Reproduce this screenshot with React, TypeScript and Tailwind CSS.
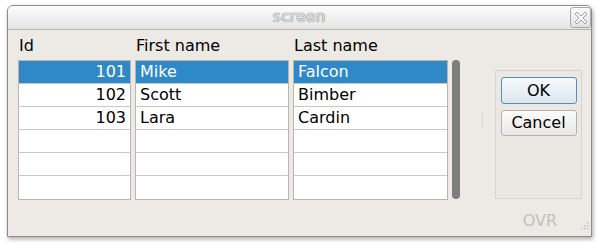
import React from "react";

type Row = { id: string; first: string; last: string };

const rows: Row[] = [
  { id: "101", first: "Mike", last: "Falcon" },
  { id: "102", first: "Scott", last: "Bimber" },
  { id: "103", first: "Lara", last: "Cardin" },
  { id: "", first: "", last: "" },
  { id: "", first: "", last: "" },
  { id: "", first: "", last: "" },
];

function Column({
  values,
  width,
  alignRight,
}: {
  values: string[];
  width: string;
  alignRight?: boolean;
}) {
  return (
    <div className={`${width} border border-[#b8b6b2] bg-white flex flex-col`}>
      {values.map((v, i) => (
        <div
          key={i}
          className={`h-[23px] leading-[22px] px-[4px] text-[16px] ${
            i < values.length - 1 ? "border-b border-[#c8c8c8]" : ""
          } ${alignRight ? "text-right" : "text-left"} ${
            i === 0 ? "bg-[#2f88c8] text-white" : "text-black"
          }`}
        >
          {v}
        </div>
      ))}
    </div>
  );
}

export default function App() {
  return (
    <div className="w-[600px] h-[243px] bg-white pt-[5px] pl-[7px] font-['DejaVu_Sans',sans-serif]">
      <div className="w-[585px] h-[232px] border border-[#8c8c8c] rounded-t-[6px] bg-[#edeae6] shadow-[1px_2px_4px_rgba(0,0,0,0.35)] flex flex-col">
        {/* title bar */}
        <div className="h-[24px] rounded-t-[5px] bg-gradient-to-b from-[#fdfdfd] to-[#e4e4e4] border-b border-[#b4b4b4] flex items-center relative">
          <div className="flex-1 text-center text-[15px] text-[#e8e8e8] [text-shadow:0_0_1px_#7e7e7e,0_0_1px_#7e7e7e,0_0_1px_#7e7e7e,1px_1px_0_#ffffff] tracking-[0.5px]">
            screen
          </div>
          <div className="absolute right-[0px] top-[1px] w-[21px] h-[21px] border border-[#a8a8a8] rounded-[3px] bg-gradient-to-b from-[#fafafa] to-[#e2e2e2] flex items-center justify-center">
            <svg width="16" height="16" viewBox="0 0 16 16">
              <path
                d="M2 4 L4 2 L8 6 L12 2 L14 4 L10 8 L14 12 L12 14 L8 10 L4 14 L2 12 L6 8 Z"
                fill="#f6f6f6"
                stroke="#9a9a9a"
                strokeWidth="0.9"
                strokeLinejoin="round"
              />
            </svg>
          </div>
        </div>

        {/* body */}
        <div className="flex flex-1 pl-[10px] pt-[6px]">
          <div className="flex flex-col">
            <div className="flex h-[20px] items-center text-[16px] leading-[20px] text-black">
              <div className="w-[117px] pl-[1px]">Id</div>
              <div className="w-[158px] pl-[1px]">First name</div>
              <div className="pl-[1px]">Last name</div>
            </div>
            <div className="flex gap-[4px] mt-[4px]">
              <Column values={rows.map((r) => r.id)} width="w-[113px]" alignRight />
              <Column values={rows.map((r) => r.first)} width="w-[154px]" />
              <Column values={rows.map((r) => r.last)} width="w-[155px]" />
              <div className="w-[8px] h-[139px] rounded-[4px] bg-[#7d7d7d]" />
            </div>
          </div>

          <div className="flex items-start pt-[76px] pl-[22px]">
            <div className="w-[2px] h-[15px] border-l border-dotted border-[#c4c4c4]" />
          </div>

          <div className="flex flex-col ml-[11px]">
            <div className="mt-[34px] w-[87px] h-[129px] border border-[#d6d3ce] bg-[#ebe8e3] rounded-[1px] flex flex-col items-center pt-[6px] gap-[6px]">
              <div className="w-[76px] h-[27px] rounded-[3px] border border-[#4f8fc6] bg-gradient-to-b from-[#f6f9fc] to-[#dde6ee] flex items-center justify-center text-[16px] text-black">
                OK
              </div>
              <div className="w-[76px] h-[26px] rounded-[3px] border border-[#b4b2ae] bg-gradient-to-b from-[#fcfcfc] to-[#e8e7e5] flex items-center justify-center text-[16px] text-black">
                Cancel
              </div>
            </div>
            <div className="flex items-end justify-end mt-[10px] mr-[-7px]">
              <span className="text-[16px] leading-[24px] text-[#c2c0bc] mr-[23px]">OVR</span>
              <svg width="9" height="9" viewBox="0 0 9 9" className="mb-[3px]">
                {[
                  [7, 1],
                  [4, 4],
                  [7, 4],
                  [1, 7],
                  [4, 7],
                  [7, 7],
                ].map(([x, y], i) => (
                  <rect key={i} x={x} y={y} width="1.5" height="1.5" fill="#c4c2be" />
                ))}
              </svg>
            </div>
          </div>
        </div>
      </div>
    </div>
  );
}
